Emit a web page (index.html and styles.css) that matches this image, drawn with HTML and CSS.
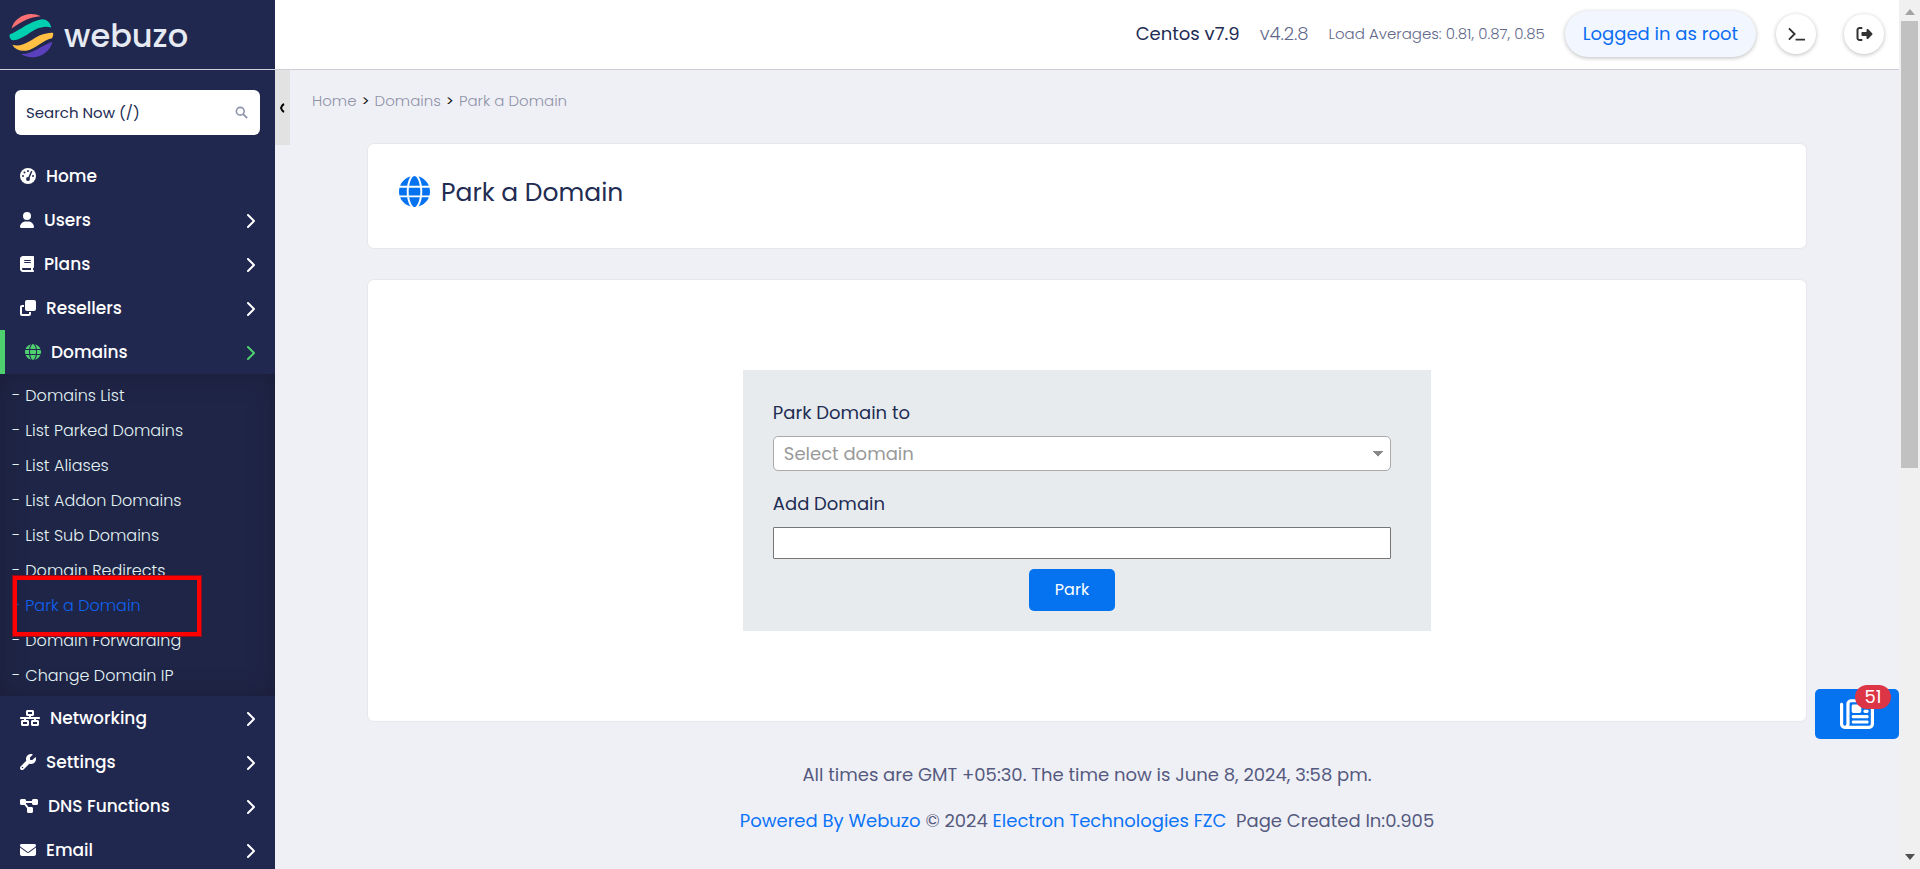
FILE: index.html
```html
<!DOCTYPE html>
<html lang="en">
<head>
<meta charset="utf-8">
<meta name="viewport" content="width=device-width, initial-scale=1">
<title>Park a Domain - Webuzo</title>
<link rel="stylesheet" href="styles.css">
</head>
<body>
<svg class="sprite" aria-hidden="true">
  <symbol id="i-chevron" viewBox="0 0 320 512"><path d="M310.600 233.400c12.500 12.500 12.500 32.800 0 45.300l-192 192c-12.500 12.500-32.800 12.500-45.300 0s-12.500-32.800 0-45.300L242.700 256 73.400 86.600c-12.500-12.500-12.500-32.800 0-45.300s32.800-12.500 45.300 0l192 192z"/></symbol>
  <symbol id="i-globe" viewBox="0 0 512 512"><path d="M352 256c0 22.200-1.200 43.600-3.300 64H163.300c-2.200-20.400-3.300-41.800-3.300-64s1.200-43.600 3.300-64H348.700c2.200 20.400 3.300 41.800 3.300 64zm28.800-64H503.900c5.300 20.500 8.100 41.900 8.100 64s-2.800 43.500-8.100 64H380.800c2.100-20.600 3.200-42 3.200-64s-1.100-43.400-3.200-64zm112.600-32H376.700c-10-63.900-29.800-117.400-55.300-151.600c78.300 20.700 142 77.500 171.900 151.600zm-149.100 0H167.700c6.100-36.400 15.500-68.600 27-94.700c10.500-23.600 22.200-40.700 33.500-51.500C239.400 3.200 248.700 0 256 0s16.600 3.200 27.800 13.800c11.300 10.800 23 27.900 33.500 51.500c11.600 26 20.900 58.200 27 94.700zm-209 0H18.600C48.600 85.900 112.200 29.100 190.600 8.400C165.100 42.600 145.300 96.100 135.300 160zM8.100 192H131.200c-2.100 20.600-3.200 42-3.200 64s1.100 43.400 3.200 64H8.100C2.800 299.500 0 278.100 0 256s2.800-43.500 8.100-64zM194.700 446.600c-11.600-26-20.900-58.200-27-94.600H344.300c-6.100 36.400-15.500 68.600-27 94.600c-10.500 23.600-22.200 40.700-33.500 51.500C272.600 508.800 263.300 512 256 512s-16.600-3.200-27.800-13.800c-11.300-10.800-23-27.900-33.500-51.500zM135.300 352c10 63.900 29.800 117.400 55.300 151.600C112.200 482.900 48.600 426.100 18.600 352H135.300zm358.100 0c-30 74.100-93.600 130.900-171.900 151.600c25.500-34.200 45.200-87.700 55.300-151.600H493.400z"/></symbol>
</svg>
<div class="app">
  <aside class="sidebar">
    <a class="brand" href="#">
      <svg class="brand-mark" viewBox="28 38 136 136" aria-hidden="true">
        <path fill="#fb7072" d="M36 85C42 55 84 28 124 48C90 50 66 64 36 85z"/>
        <path fill="#00cfb0" d="M30 103C62 90 92 62 128 57C142 57 152 66 156 82C130 74 108 86 80 105C60 117 40 124 34 118C30 114 29 108 30 103z"/>
        <path fill="#ffc043" d="M38 134C70 144 98 116 120 106C138 99 152 97 161 98C163 106 160 110 158 114C130 120 106 148 80 152C60 154 46 148 38 134z"/>
        <path fill="#5b40bd" d="M64 162C98 164 122 138 159 125C153 155 122 176 90 171C78 169 70 166 64 162z"/>
      </svg>
      <span class="brand-name">webuzo</span>
    </a>
    <form class="search">
      <input type="text" placeholder="Search Now (/)" aria-label="Search Now">
      <svg viewBox="0 0 16 16" aria-hidden="true"><circle cx="6.500" cy="6.500" r="4.800"/><path d="M10 10l5 5"/></svg>
    </form>
    <nav class="nav">
      <a class="nav-item" href="#"><svg class="w16" viewBox="0 0 512 512"><circle cx="256" cy="256" r="256"/><g class="cut"><circle cx="256" cy="96" r="32"/><circle cx="144" cy="144" r="32"/><circle cx="96" cy="256" r="32"/><circle cx="416" cy="256" r="32"/><circle cx="256" cy="352" r="62"/><path d="M345 108a24 24 0 0 1 44 20L300 330l-44-20z"/></g></svg><span>Home</span></a>
      <a class="nav-item" href="#"><svg class="w14" viewBox="0 0 448 512"><path d="M224 256A128 128 0 1 0 224 0a128 128 0 1 0 0 256zm-45.700 48C79.800 304 0 383.800 0 482.300C0 498.700 13.300 512 29.700 512H418.300c16.400 0 29.700-13.300 29.700-29.700C448 383.800 368.200 304 269.700 304H178.300z"/></svg><span>Users</span><svg class="chev"><use href="#i-chevron"/></svg></a>
      <a class="nav-item" href="#"><svg class="w14" viewBox="0 0 448 512"><path d="M96 0C43 0 0 43 0 96V416c0 53 43 96 96 96H384h32c17.700 0 32-14.300 32-32s-14.300-32-32-32V384c17.700 0 32-14.300 32-32V32c0-17.700-14.300-32-32-32H384 96zm0 384H352v64H96c-17.700 0-32-14.300-32-32s14.300-32 32-32zm32-240c0-8.800 7.200-16 16-16H336c8.800 0 16 7.200 16 16s-7.200 16-16 16H144c-8.800 0-16-7.200-16-16zm16 48H336c8.800 0 16 7.200 16 16s-7.200 16-16 16H144c-8.800 0-16-7.200-16-16s7.200-16 16-16z"/></svg><span>Plans</span><svg class="chev"><use href="#i-chevron"/></svg></a>
      <a class="nav-item" href="#"><svg class="w16" viewBox="0 0 512 512"><path d="M288 448H64V224h64V160H64c-35.300 0-64 28.700-64 64V448c0 35.300 28.700 64 64 64H288c35.300 0 64-28.700 64-64V384H288v64zm-64-96H448c35.300 0 64-28.700 64-64V64c0-35.300-28.700-64-64-64H224c-35.300 0-64 28.700-64 64V288c0 35.300 28.700 64 64 64z"/></svg><span>Resellers</span><svg class="chev"><use href="#i-chevron"/></svg></a>
      <a class="nav-item active" href="#"><svg class="w16"><use href="#i-globe"/></svg><span>Domains</span><svg class="chev"><use href="#i-chevron"/></svg></a>
      <div class="submenu">
        <a href="#">Domains List</a>
        <a href="#">List Parked Domains</a>
        <a href="#">List Aliases</a>
        <a href="#">List Addon Domains</a>
        <a href="#">List Sub Domains</a>
        <a href="#">Domain Redirects</a>
        <a class="current" href="#">Park a Domain</a>
        <a href="#">Domain Forwarding</a>
        <a href="#">Change Domain IP</a>
        <div class="marker"></div>
      </div>
      <a class="nav-item" href="#"><svg class="w20" viewBox="0 0 640 512"><path d="M256 64H384v64H256V64zM240 0c-26.500 0-48 21.500-48 48v96c0 26.500 21.500 48 48 48h48v32H32c-17.700 0-32 14.300-32 32s14.300 32 32 32h96v32H80c-26.500 0-48 21.500-48 48v96c0 26.500 21.500 48 48 48H240c26.500 0 48-21.500 48-48V368c0-26.500-21.500-48-48-48H192V288H448v32H400c-26.500 0-48 21.500-48 48v96c0 26.500 21.500 48 48 48H560c26.500 0 48-21.500 48-48V368c0-26.500-21.500-48-48-48H512V288h96c17.700 0 32-14.300 32-32s-14.300-32-32-32H352V192h48c26.500 0 48-21.500 48-48V48c0-26.500-21.500-48-48-48H240zM96 448V384H224v64H96zm320-64H544v64H416V384z"/></svg><span>Networking</span><svg class="chev"><use href="#i-chevron"/></svg></a>
      <a class="nav-item" href="#"><svg class="w16" viewBox="0 0 512 512"><path d="M352 320c88.400 0 160-71.600 160-160c0-15.300-2.200-30.100-6.200-44.200c-3.100-10.800-16.400-13.200-24.300-5.300l-76.800 76.800c-3 3-7.100 4.700-11.300 4.700H336c-8.800 0-16-7.200-16-16V118.600c0-4.200 1.700-8.300 4.700-11.300l76.800-76.800c7.900-7.900 5.400-21.200-5.300-24.300C382.100 2.200 367.300 0 352 0C263.600 0 192 71.600 192 160c0 19.100 3.400 37.500 9.500 54.500L19.900 396.100C7.200 408.800 0 426.100 0 444.100C0 481.600 30.400 512 67.900 512c18 0 35.300-7.200 48-19.900L297.500 310.500c17 6.200 35.400 9.500 54.500 9.500zM80 408a24 24 0 1 1 0 48 24 24 0 1 1 0-48z"/></svg><span>Settings</span><svg class="chev"><use href="#i-chevron"/></svg></a>
      <a class="nav-item" href="#"><svg class="w18" viewBox="0 0 576 512"><path d="M0 80C0 53.500 21.500 32 48 32h96c26.500 0 48 21.500 48 48V96H384V80c0-26.500 21.500-48 48-48h96c26.500 0 48 21.500 48 48v96c0 26.500-21.500 48-48 48H432c-26.500 0-48-21.500-48-48V160H192v16c0 1.700-.1 3.400-.3 5L272 288h96c26.500 0 48 21.500 48 48v96c0 26.500-21.500 48-48 48H272c-26.500 0-48-21.500-48-48V336c0-1.700 .1-3.400 .3-5L144 224H48c-26.500 0-48-21.500-48-48V80z"/></svg><span>DNS Functions</span><svg class="chev"><use href="#i-chevron"/></svg></a>
      <a class="nav-item" href="#"><svg class="w16" viewBox="0 0 512 512"><path d="M48 64C21.500 64 0 85.500 0 112c0 15.100 7.100 29.300 19.200 38.400L236.800 313.600c11.400 8.500 27 8.500 38.400 0L492.800 150.400c12.100-9.100 19.200-23.300 19.200-38.400c0-26.500-21.500-48-48-48H48zM0 176V384c0 35.300 28.700 64 64 64H448c35.300 0 64-28.700 64-64V176L294.400 339.200c-22.800 17.100-54 17.100-76.800 0L0 176z"/></svg><span>Email</span><svg class="chev"><use href="#i-chevron"/></svg></a>
    </nav>
  </aside>

  <div class="main">
    <header class="topbar">
      <span class="os">Centos v7.9</span>
      <span class="version">v4.2.8</span>
      <span class="load">Load Averages: 0.81, 0.87, 0.85</span>
      <button class="user" type="button">Logged in as root</button>
      <button class="round" type="button" aria-label="Terminal"><svg viewBox="0 0 18 16"><path d="M1 2l6 6-6 6M8 14h10" fill="none" stroke="#333" stroke-width="2"/></svg></button>
      <button class="round" type="button" aria-label="Log out"><svg viewBox="0 0 512 512"><path fill="#333" d="M377.900 105.900L500.700 228.700c7.200 7.200 11.300 17.100 11.300 27.300s-4.100 20.100-11.300 27.300L377.900 406.100c-6.400 6.400-15 9.900-24 9.900c-18.700 0-33.900-15.200-33.900-33.900l0-62.100-128 0c-17.700 0-32-14.300-32-32l0-64c0-17.700 14.300-32 32-32l128 0 0-62.100c0-18.700 15.200-33.900 33.900-33.900c9 0 17.600 3.600 24 9.900zM160 96L96 96c-17.700 0-32 14.300-32 32l0 256c0 17.700 14.300 32 32 32l64 0c17.700 0 32 14.300 32 32s-14.300 32-32 32l-64 0c-53 0-96-43-96-96L0 128C0 75 43 32 96 32l64 0c17.700 0 32 14.300 32 32s-14.300 32-32 32z"/></svg></button>
    </header>
    <div class="crumb-row">
      <button class="collapse" type="button" aria-label="Collapse menu"><svg viewBox="0 0 6 10"><path d="M4 1Q2 2 1 5Q2 8 4 9" fill="none" stroke="#000" stroke-width="2"/></svg></button>
      <nav class="crumbs" aria-label="Breadcrumb"><a href="#">Home</a><span>&gt;</span><a href="#">Domains</a><span>&gt;</span><a href="#">Park a Domain</a></nav>
    </div>
    <main class="content">
      <section class="card heading">
        <svg><use href="#i-globe"/></svg>
        <h1>Park a Domain</h1>
      </section>
      <section class="card body">
        <form class="park">
          <label for="park-to">Park Domain to</label>
          <select id="park-to"><option>Select domain</option></select>
          <label for="add-domain">Add Domain</label>
          <input id="add-domain" type="text">
          <div class="actions"><button type="button">Park</button></div>
        </form>
      </section>
    </main>
    <footer class="footer">
      <p>All times are GMT +05:30. The time now is June 8, 2024, 3:58 pm.</p>
      <p><a href="#">Powered By Webuzo</a> © 2024 <a href="#">Electron Technologies FZC</a> &nbsp;Page Created In:0.905</p>
    </footer>
    <button class="news" type="button" aria-label="News">
      <svg viewBox="0 0 512 512"><path d="M168 80c-13.300 0-24 10.700-24 24V408c0 8.400-1.400 16.500-4.100 24H440c13.300 0 24-10.700 24-24V104c0-13.300-10.700-24-24-24H168zM72 480c-39.800 0-72-32.200-72-72V112C0 98.700 10.700 88 24 88s24 10.700 24 24V408c0 13.300 10.700 24 24 24s24-10.700 24-24V104c0-39.800 32.200-72 72-72H440c39.800 0 72 32.200 72 72V408c0 39.800-32.200 72-72 72H72zM176 136c0-13.300 10.700-24 24-24h96c13.300 0 24 10.700 24 24v80c0 13.300-10.700 24-24 24H200c-13.300 0-24-10.700-24-24V136zm200-24h32c13.300 0 24 10.700 24 24s-10.700 24-24 24H376c-13.300 0-24-10.700-24-24s10.700-24 24-24zm0 80h32c13.300 0 24 10.700 24 24s-10.700 24-24 24H376c-13.300 0-24-10.700-24-24s10.700-24 24-24zM200 272H408c13.300 0 24 10.700 24 24s-10.700 24-24 24H200c-13.300 0-24-10.700-24-24s10.700-24 24-24zm0 80H408c13.300 0 24 10.700 24 24s-10.700 24-24 24H200c-13.300 0-24-10.700-24-24s10.700-24 24-24z"/></svg>
      <span class="badge">51</span>
    </button>
  </div>

  <div class="scrollbar" aria-hidden="true">
    <svg viewBox="0 0 10 6"><path fill="#a3a3a3" d="M0 6L5 0l5 6z"/></svg>
    <div class="track"><div class="thumb"></div></div>
    <svg viewBox="0 0 10 6"><path fill="#505050" d="M0 0h10L5 6z"/></svg>
  </div>
</div>
</body>
</html>
```
FILE: styles.css
```css
*, *::before, *::after { box-sizing: border-box; }
:root {
  --navy: #21284f;
  --blue: #0573f0;
  --line: #cdced6;
}
body {
  margin: 0;
  background: #eff0f6;
  color: #222b52;
  font: 400 18px/24px Poppins, Inter, "Open Sans", sans-serif;
}
a { color: inherit; text-decoration: none; }
button, input, select { font: inherit; color: inherit; }
.sprite { position: absolute; width: 0; height: 0; }

.app { display: flex; height: 100vh; overflow: hidden; }

/* Sidebar */
.sidebar { flex: 0 0 275px; background: var(--navy); color: #fff; overflow: hidden; }
.brand { display: flex; align-items: center; gap: 10px; height: 70px; padding: 2px 9px 0; border-bottom: 1px solid var(--line); }
.brand-mark { width: 45px; height: 45px; }
.brand-name { font: 500 32px/40px Poppins, Lato, sans-serif; color: #e6ebf3; }
.search { display: flex; align-items: center; height: 45px; margin: 20px 15px 19px; padding: 0 12px 0 11px; background: #fff; border-radius: 6px; }
.search input { flex: 1; min-width: 0; padding: 0; border: 0; outline: 0; background: none; font-size: 15px; color: #222b52; }
.search input::placeholder { color: #222b52; opacity: 1; }
.search svg { width: 13px; height: 13px; fill: none; stroke: #8d93ab; stroke-width: 2; }

.nav-item { display: flex; align-items: center; gap: 10px; height: 44px; padding: 0 20px; font-size: 17px; font-weight: 500; }
.nav-item svg { height: 16px; fill: #fff; }
.nav-item .cut { fill: var(--navy); }
.w14 { width: 14px; }
.w16 { width: 16px; }
.w18 { width: 18px; }
.w20 { width: 20px; }
.nav-item .chev { width: 10px; height: 16px; margin: 2px 0 0 auto; }
.nav-item.active { border-left: 5px solid #4fd06f; padding-left: 20px; }
.nav-item.active svg { fill: #4fd06f; }

.submenu { position: relative; padding: 4px 0 3px; background: #1f2546; box-shadow: inset 0 0 25px #1b1e3a; color: #e3f3f5; }
.submenu a { display: flex; gap: 5px; height: 35px; align-items: center; padding-left: 12px; font-size: 16px; font-weight: 300; }
.submenu a::before { content: "-"; }
.submenu .current { color: #0f62ef; }
.marker { position: absolute; left: 12px; top: 201px; width: 190px; height: 62px; border: 5px solid #f00; outline: 1px solid #8b0d1f; outline-offset: -1px; }

/* Main column */
.main { position: relative; flex: 1; min-width: 0; }
.topbar { display: flex; align-items: center; justify-content: flex-end; gap: 20px; height: 70px; padding: 0 15px 1px; background: #fff; border-bottom: 1px solid var(--line); }
.version { color: #62688a; font-weight: 300; }
.load { color: #62688a; font-size: 15px; font-weight: 300; }
.user { height: 46px; padding: 0 18px; border: 0; border-radius: 23px; background: #f2f7ff; color: #0a6cf1; box-shadow: 0 1px 4px #0004; white-space: nowrap; }
.round { display: grid; place-items: center; width: 40px; height: 40px; padding: 0; border: 0; border-radius: 50%; background: #fff; box-shadow: 0 1px 4px #0004; }
.round + .round { margin-left: 8px; }
.round svg { width: 17px; height: 16px; }

.crumb-row { display: flex; align-items: flex-start; gap: 22px; height: 73px; }
.collapse { display: grid; place-items: center; width: 15px; height: 75px; padding: 0; border: 0; background: #e2e2e2; }
.collapse svg { width: 6px; height: 10px; }
.crumbs { display: flex; gap: 5px; padding-top: 19px; font-size: 15px; font-weight: 300; color: #8f93a8; }
.crumbs span { color: #111; font-weight: 400; }

.content { display: flex; flex-direction: column; gap: 30px; margin: 0 92px; }
.card { background: #fff; border: 1px solid #e6e7eb; border-radius: 7px; }
.heading { display: flex; align-items: center; gap: 11px; height: 106px; padding: 0 31px 9px; }
.heading svg { width: 31px; height: 31px; fill: var(--blue); }
.heading h1 { margin: 0; padding-top: 2px; font-size: 25px; font-weight: 400; line-height: 30px; }
.body { padding: 90px 2px; }
.park { width: 48%; margin: 0 auto; padding: 31px 40px 20px 30px; background: #e7ebee; }
.park label { display: block; margin-bottom: 11px; }
.park select, .park input { display: block; width: 100%; background-color: #fff; }
.park select {
  appearance: none; height: 35px; margin-bottom: 21px; padding: 0 10px; border: 1px solid #aaa; border-radius: 5px; color: #999;
  background-image: linear-gradient(to bottom right, #888 50%, transparent 51%), linear-gradient(to bottom left, #888 50%, transparent 51%);
  background-size: 5px 6px; background-position: right 7px center, right 12px center; background-repeat: no-repeat;
}
.park input { height: 32px; border: 1px solid #767676; border-radius: 1px; }
.actions { padding: 10px 20px 0 0; text-align: center; }
.actions button { display: inline-block; vertical-align: top; height: 42px; width: 86px; border: 0; border-radius: 5px; background: var(--blue); color: #fff; font-size: 16px; }

.footer { padding-top: 41px; text-align: center; color: #555a7e; }
.footer p { margin: 0 0 22px; }
.footer a { color: #0a73f8; }

.news { position: absolute; right: 0; bottom: 130px; display: grid; place-items: center; width: 84px; height: 50px; padding: 0; border: 0; border-radius: 5px; background: var(--blue); }
.news svg { width: 34px; height: 34px; fill: #fff; }
.badge { position: absolute; right: 8px; top: -4px; width: 36px; border-radius: 13px; background: #dc3546; color: #fff; }

/* Scrollbar */
.scrollbar { flex: 0 0 21px; display: flex; flex-direction: column; align-items: center; gap: 6px; padding: 9px 0; background: #f0f0f0; }
.scrollbar svg { width: 10px; height: 6px; }
.track { flex: 1; width: 17px; }
.thumb { height: 54%; background: #c1c1c1; }
```
